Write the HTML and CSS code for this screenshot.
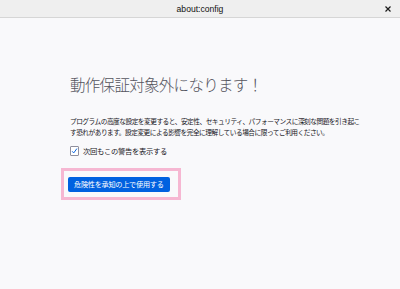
FILE: index.html
```html
<!DOCTYPE html>
<html lang="ja">
<head>
<meta charset="utf-8">
<title>about:config</title>
<link rel="stylesheet" href="styles.css">
</head>
<body>
<header class="titlebar">
  <span></span>
  <span class="title">about:config</span>
  <span class="close"><svg width="6" height="6" viewBox="0 0 6 6"><path d="M0.5 0.5 L5.5 5.5 M5.5 0.5 L0.5 5.5" stroke="#1c1c1c" stroke-width="1.2" fill="none"/></svg></span>
</header>
<main class="content">
  <h1 class="heading">動作保証対象外になります！</h1>
  <p class="desc">プログラムの高度な設定を変更すると、安定性、セキュリティ、パフォーマンスに深刻な問題を引き起こす恐れがあります。設定変更による影響を完全に理解している場合に限ってご利用ください。</p>
  <label class="check-row">
    <span class="checkbox"><svg width="8" height="8" viewBox="0 0 8 8"><path d="M1.3 4.3 L3.1 6.2 L6.8 1.2" stroke="#0060df" stroke-width="1.1" fill="none"/></svg></span>
    <span class="check-label">次回もこの警告を表示する</span>
  </label>
  <div class="highlight">
    <button class="accept">危険性を承知の上で使用する</button>
  </div>
</main>
</body>
</html>
```
FILE: styles.css
```css
html, body {
  margin: 0;
  padding: 0;
  background: #f9f9fb;
}
body {
  font-family: "Noto Sans CJK JP", sans-serif;
  color: #15141a;
}
.titlebar {
  height: 17px;
  background: #efefef;
  border-bottom: 1px solid #d6d6d6;
  display: grid;
  grid-template-columns: 1fr auto 1fr;
  align-items: center;
}
.title {
  font-family: "Liberation Sans", Arial, sans-serif;
  font-size: 8.6px;
  color: #111;
}
.close {
  justify-self: end;
  padding-right: 9px;
  display: flex;
}
.content {
  padding: 56px 0 0 70px;
}
.heading {
  margin: 0;
  font-size: 15.5px;
  line-height: 20px;
  font-weight: 300;
  letter-spacing: -0.7px;
  color: #55555e;
}
.desc {
  margin: 22px 0 0;
  width: 294px;
  font-size: 6.7px;
  letter-spacing: -0.5px;
  line-height: 11px;
  color: #15141a;
}
.check-row {
  margin-top: 8px;
  display: flex;
  align-items: center;
  gap: 4px;
  height: 10px;
}
.checkbox {
  width: 7px;
  height: 8px;
  border: 1px solid #8f8f9d;
  background: #fff;
  border-radius: 1px;
  display: flex;
  align-items: center;
  justify-content: center;
}
.check-label {
  font-size: 7.3px;
  letter-spacing: -0.3px;
  color: #15141a;
}
.highlight {
  display: inline-block;
  margin: 12px 0 0 -9px;
  border: 3px solid #f6b7d2;
  padding: 6px 8px 5px 4px;
}
.accept {
  display: block;
  border: none;
  margin: 0;
  padding: 0 6px;
  height: 15px;
  line-height: 15px;
  font-family: "Noto Sans CJK JP", sans-serif;
  font-size: 7.2px;
  letter-spacing: -0.3px;
  color: #fff;
  background: #0061e0;
  border-radius: 2px;
}
```
